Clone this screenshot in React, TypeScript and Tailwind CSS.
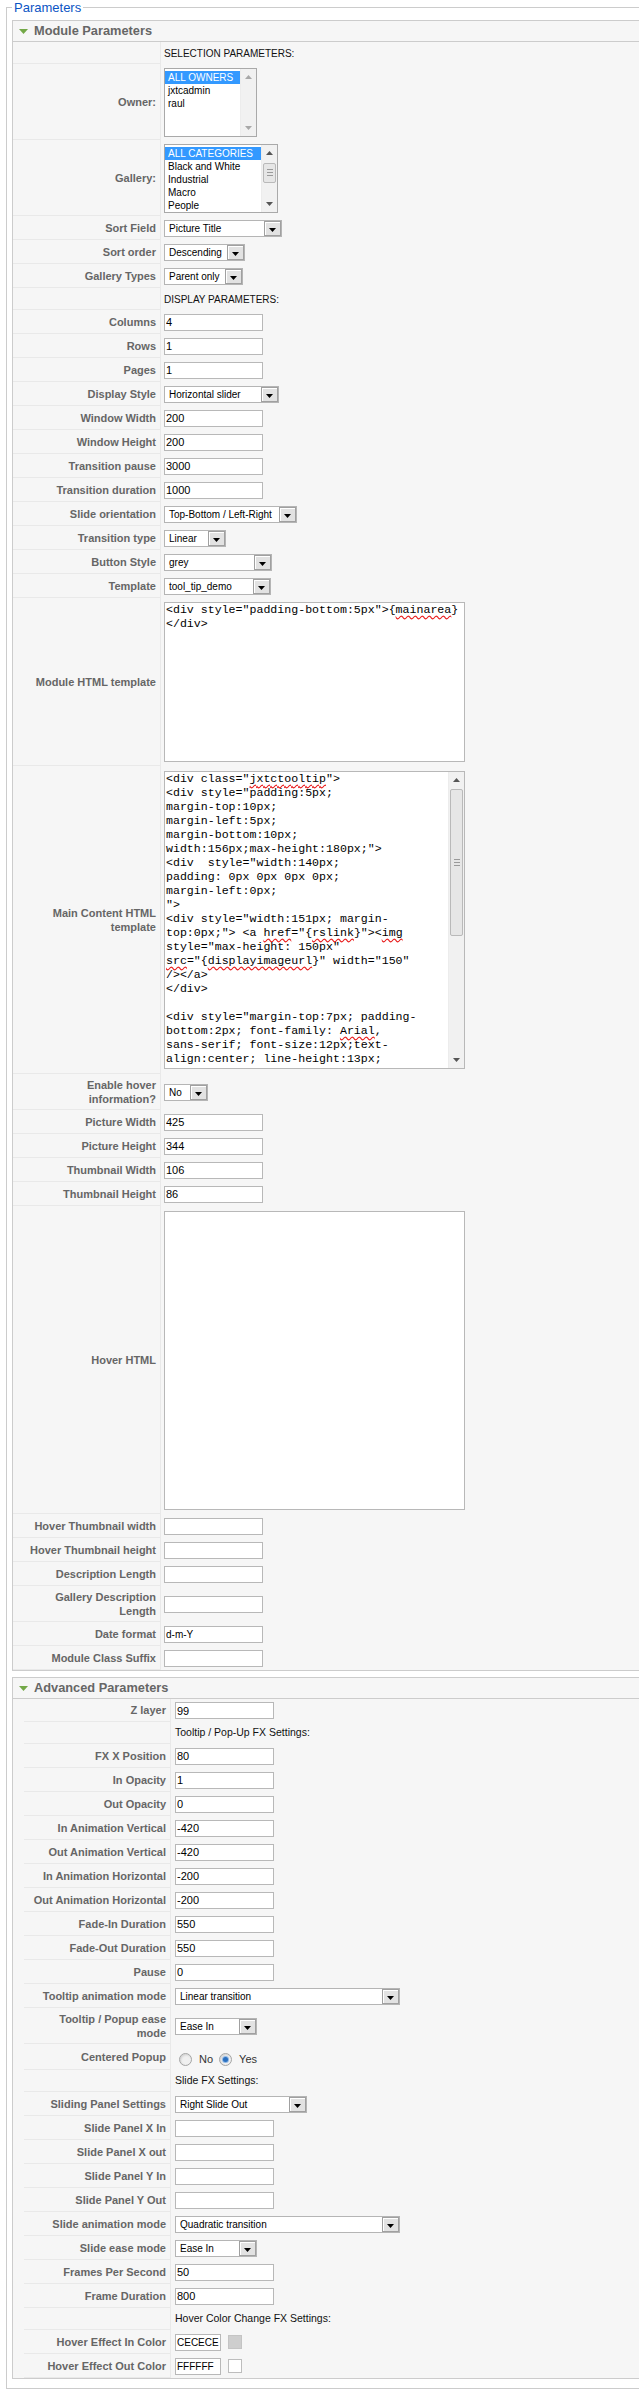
import type { ReactNode } from "react";

const sq = (t: string) => (
  <span className="underline decoration-wavy decoration-[#e81b1b] underline-offset-[2px]">{t}</span>
);

const moduleLines: ReactNode[] = [
  <>
    {'<div style="padding-bottom:5px">{'}
    {sq("mainarea")}
    {"}"}
  </>,
  "</div>",
];

const mainLines: ReactNode[] = [
  <>
    {'<div class="'}
    {sq("jxtctooltip")}
    {'">'}
  </>,
  '<div style="padding:5px;',
  "margin-top:10px;",
  "margin-left:5px;",
  "margin-bottom:10px;",
  'width:156px;max-height:180px;">',
  '<div  style="width:140px;',
  "padding: 0px 0px 0px 0px;",
  "margin-left:0px;",
  '">',
  '<div style="width:151px; margin-',
  <>
    {'top:0px;"> <a '}
    {sq("href")}
    {'="{'}
    {sq("rslink")}
    {'}"><'}
    {sq("img")}
  </>,
  'style="max-height: 150px"',
  <>
    {sq("src")}
    {'="{'}
    {sq("displayimageurl")}
    {'}" width="150"'}
  </>,
  "/></a>",
  "</div>",
  "",
  '<div style="margin-top:7px; padding-',
  <>
    {"bottom:2px; font-family: "}
    {sq("Arial")}
    {","}
  </>,
  "sans-serif; font-size:12px;text-",
  "align:center; line-height:13px;",
];

const Arrow = ({ up, color }: { up?: boolean; color: string }) => (
  <svg width="7" height="4" viewBox="0 0 7 4">
    <path d={up ? "M0 4h7L3.5 0z" : "M0 0h7L3.5 4z"} fill={color} />
  </svg>
);

function ScrollBar({ thumb, dim }: { thumb?: string; dim?: boolean }) {
  const c = dim ? "#a8a8a8" : "#555";
  return (
    <div className="w-[16px] shrink-0 flex flex-col bg-[#f1f1f1] border-l border-[#ececec]">
      <div className="h-[16px] flex items-center justify-center">
        <Arrow up color={c} />
      </div>
      <div className="flex-1">
        {thumb && (
          <div
            className={`${thumb} mx-[1px] rounded-[2px] border border-[#b9b9b9] bg-[#e6e6e6] flex flex-col items-center justify-center gap-[2px]`}
          >
            <div className="w-[6px] h-px bg-[#9a9a9a]" />
            <div className="w-[6px] h-px bg-[#9a9a9a]" />
            <div className="w-[6px] h-px bg-[#9a9a9a]" />
          </div>
        )}
      </div>
      <div className="h-[16px] flex items-center justify-center">
        <Arrow color={c} />
      </div>
    </div>
  );
}

function TextInput({ value = "", w = "w-[99px]", small }: { value?: string; w?: string; small?: boolean }) {
  return (
    <input
      readOnly
      value={value}
      className={`${w} h-[17px] border border-[#b8b8b8] bg-white pl-[1px] ${small ? "text-[10px]" : "text-[11px]"} text-black outline-none`}
    />
  );
}

function Select({ value, w }: { value: string; w: string }) {
  return (
    <div className={`${w} h-[17px] border border-[#b5b5b5] bg-white flex`}>
      <span className="flex-1 min-w-0 pl-[4px] text-[10px] leading-[15px] text-black whitespace-nowrap overflow-hidden">
        {value}
      </span>
      <span className="w-[17px] h-[15px] border border-[#a0a0a0] bg-[#e2e2e2] flex items-center justify-center pt-[3px] shadow-[inset_1px_1px_0_#fff]">
        <Arrow color="#000" />
      </span>
    </div>
  );
}

function ListBox({ items, w, thumb, dim }: { items: string[]; w: string; thumb?: string; dim?: boolean }) {
  return (
    <div className={`${w} h-[69px] border border-[#a9a9a9] bg-white flex`}>
      <div className="flex-1 min-w-0 pt-[2px]">
        {items.map((it, i) => (
          <div
            key={it}
            className={`h-[13px] leading-[13px] pl-[3px] text-[10px] whitespace-nowrap ${
              i === 0 ? "bg-[#3399ff] text-white" : "text-black"
            }`}
          >
            {it}
          </div>
        ))}
      </div>
      <ScrollBar thumb={thumb} dim={dim} />
    </div>
  );
}

function CodeArea({ h, lines = [], thumb }: { h: string; lines?: ReactNode[]; thumb?: string }) {
  return (
    <div className={`w-[301px] ${h} border border-[#b8b8b8] bg-white flex`}>
      <div className="flex-1 min-w-0 pl-[1px] font-['Liberation_Mono',monospace] text-[11.6px] text-black">
        {lines.map((l, i) => (
          <div key={i} className="h-[14px] leading-[14px] whitespace-pre">
            {l}
          </div>
        ))}
      </div>
      {thumb && <ScrollBar thumb={thumb} />}
    </div>
  );
}

const Note = ({ children, size = "text-[10px]" }: { children: ReactNode; size?: string }) => (
  <span className={`${size} text-[#111]`}>{children}</span>
);

function Row({ label, h, children, adv }: { label?: ReactNode; h: string; children?: ReactNode; adv?: boolean }) {
  return (
    <div className={`flex ${h}`}>
      <div
        className={`${
          adv ? "w-[147px]" : "w-[148px]"
        } shrink-0 flex items-center justify-end text-right pr-[4px] border-r border-b border-[#e9e9e9] text-[11px] leading-[14px] font-bold text-[#666]`}
      >
        <span>{label}</span>
      </div>
      <div className={`flex items-center ${adv ? "pl-[4px]" : "pl-[3px]"}`}>{children}</div>
    </div>
  );
}

function PanelHeader({ title }: { title: string }) {
  return (
    <div className="h-[21px] border-b border-[#ccc] flex items-center pl-[6px]">
      <svg width="9" height="5" viewBox="0 0 9 5">
        <path d="M0 0h9L4.5 5z" fill="#73a847" />
      </svg>
      <span className="ml-[6px] text-[12.8px] font-bold text-[#666]">{title}</span>
    </div>
  );
}

function Radio({ checked }: { checked?: boolean }) {
  return (
    <span className="w-[13px] h-[13px] rounded-full border border-[#a4a4a4] bg-[#f0f0f0] flex items-center justify-center shadow-[inset_1px_1px_2px_#d0d0d0]">
      {checked && <span className="w-[5px] h-[5px] rounded-full bg-[#2a6fbf] shadow-[0_0_0_1px_#8fb8e6]" />}
    </span>
  );
}

export default function App() {
  return (
    <div className="w-full overflow-hidden bg-white font-['Liberation_Sans',Arial,sans-serif] pb-[7px]">
      <fieldset className="w-[700px] ml-[6px] border border-[#ccc] pl-[5px] pt-[5px] pb-[9px]">
        <legend className="px-[2px] text-[13px] leading-[15px] text-[#0b55c4]">Parameters</legend>

        <div className="border border-[#ccc] bg-[#f6f6f6]">
          <PanelHeader title="Module Parameters" />
          <Row h="h-[22px]">
            <Note>SELECTION PARAMETERS:</Note>
          </Row>
          <Row label="Owner:" h="h-[76px]">
            <ListBox w="w-[93px]" items={["ALL OWNERS", "jxtcadmin", "raul"]} dim />
          </Row>
          <Row label="Gallery:" h="h-[76px]">
            <ListBox
              w="w-[114px]"
              items={["ALL CATEGORIES", "Black and White", "Industrial", "Macro", "People"]}
              thumb="mt-[2px] h-[20px]"
            />
          </Row>
          <Row label="Sort Field" h="h-[24px]">
            <Select w="w-[118px]" value="Picture Title" />
          </Row>
          <Row label="Sort order" h="h-[24px]">
            <Select w="w-[81px]" value="Descending" />
          </Row>
          <Row label="Gallery Types" h="h-[24px]">
            <Select w="w-[79px]" value="Parent only" />
          </Row>
          <Row h="h-[22px]">
            <Note>DISPLAY PARAMETERS:</Note>
          </Row>
          <Row label="Columns" h="h-[24px]">
            <TextInput value="4" />
          </Row>
          <Row label="Rows" h="h-[24px]">
            <TextInput value="1" />
          </Row>
          <Row label="Pages" h="h-[24px]">
            <TextInput value="1" />
          </Row>
          <Row label="Display Style" h="h-[24px]">
            <Select w="w-[115px]" value="Horizontal slider" />
          </Row>
          <Row label="Window Width" h="h-[24px]">
            <TextInput value="200" />
          </Row>
          <Row label="Window Height" h="h-[24px]">
            <TextInput value="200" />
          </Row>
          <Row label="Transition pause" h="h-[24px]">
            <TextInput value="3000" />
          </Row>
          <Row label="Transition duration" h="h-[24px]">
            <TextInput value="1000" />
          </Row>
          <Row label="Slide orientation" h="h-[24px]">
            <Select w="w-[133px]" value="Top-Bottom / Left-Right" />
          </Row>
          <Row label="Transition type" h="h-[24px]">
            <Select w="w-[62px]" value="Linear" />
          </Row>
          <Row label="Button Style" h="h-[24px]">
            <Select w="w-[108px]" value="grey" />
          </Row>
          <Row label="Template" h="h-[24px]">
            <Select w="w-[107px]" value="tool_tip_demo" />
          </Row>
          <Row label="Module HTML template" h="h-[168px]">
            <CodeArea h="h-[160px]" lines={moduleLines} />
          </Row>
          <Row
            label={
              <>
                Main Content HTML
                <br />
                template
              </>
            }
            h="h-[308px]"
          >
            <CodeArea h="h-[298px]" lines={mainLines} thumb="mt-[1px] h-[147px]" />
          </Row>
          <Row
            label={
              <>
                Enable hover
                <br />
                information?
              </>
            }
            h="h-[36px]"
          >
            <Select w="w-[44px]" value="No" />
          </Row>
          <Row label="Picture Width" h="h-[24px]">
            <TextInput value="425" />
          </Row>
          <Row label="Picture Height" h="h-[24px]">
            <TextInput value="344" />
          </Row>
          <Row label="Thumbnail Width" h="h-[24px]">
            <TextInput value="106" />
          </Row>
          <Row label="Thumbnail Height" h="h-[24px]">
            <TextInput value="86" />
          </Row>
          <Row label="Hover HTML" h="h-[308px]">
            <CodeArea h="h-[299px]" />
          </Row>
          <Row label="Hover Thumbnail width" h="h-[24px]">
            <TextInput />
          </Row>
          <Row label="Hover Thumbnail height" h="h-[24px]">
            <TextInput />
          </Row>
          <Row label="Description Length" h="h-[24px]">
            <TextInput />
          </Row>
          <Row
            label={
              <>
                Gallery Description
                <br />
                Length
              </>
            }
            h="h-[36px]"
          >
            <TextInput />
          </Row>
          <Row label="Date format" h="h-[24px]">
            <TextInput value="d-m-Y" small />
          </Row>
          <Row label="Module Class Suffix" h="h-[24px]">
            <TextInput />
          </Row>
        </div>

        <div className="mt-[6px] border border-[#ccc] bg-[#f6f6f6]">
          <PanelHeader title="Advanced Parameters" />
          <div className="pl-[11px]">
            <Row adv label="Z layer" h="h-[23px]">
              <TextInput value="99" />
            </Row>
            <Row adv h="h-[22px]">
              <Note size="text-[10.5px]">Tooltip / Pop-Up FX Settings:</Note>
            </Row>
            <Row adv label="FX X Position" h="h-[24px]">
              <TextInput value="80" />
            </Row>
            <Row adv label="In Opacity" h="h-[24px]">
              <TextInput value="1" />
            </Row>
            <Row adv label="Out Opacity" h="h-[24px]">
              <TextInput value="0" />
            </Row>
            <Row adv label="In Animation Vertical" h="h-[24px]">
              <TextInput value="-420" />
            </Row>
            <Row adv label="Out Animation Vertical" h="h-[24px]">
              <TextInput value="-420" />
            </Row>
            <Row adv label="In Animation Horizontal" h="h-[24px]">
              <TextInput value="-200" />
            </Row>
            <Row adv label="Out Animation Horizontal" h="h-[24px]">
              <TextInput value="-200" />
            </Row>
            <Row adv label="Fade-In Duration" h="h-[24px]">
              <TextInput value="550" />
            </Row>
            <Row adv label="Fade-Out Duration" h="h-[24px]">
              <TextInput value="550" />
            </Row>
            <Row adv label="Pause" h="h-[24px]">
              <TextInput value="0" />
            </Row>
            <Row adv label="Tooltip animation mode" h="h-[24px]">
              <Select w="w-[225px]" value="Linear transition" />
            </Row>
            <Row
              adv
              label={
                <>
                  Tooltip / Popup ease
                  <br />
                  mode
                </>
              }
              h="h-[36px]"
            >
              <Select w="w-[82px]" value="Ease In" />
            </Row>
            <Row adv label="Centered Popup" h="h-[26px]">
              <div className="flex items-center pl-[4px] pt-[4px] text-[11px] text-[#333]">
                <Radio />
                <span className="ml-[7px]">No</span>
                <span className="ml-[6px]">
                  <Radio checked />
                </span>
                <span className="ml-[7px]">Yes</span>
              </div>
            </Row>
            <Row adv h="h-[22px]">
              <Note size="text-[10.5px]">Slide FX Settings:</Note>
            </Row>
            <Row adv label="Sliding Panel Settings" h="h-[24px]">
              <Select w="w-[132px]" value="Right Slide Out" />
            </Row>
            <Row adv label="Slide Panel X In" h="h-[24px]">
              <TextInput />
            </Row>
            <Row adv label="Slide Panel X out" h="h-[24px]">
              <TextInput />
            </Row>
            <Row adv label="Slide Panel Y In" h="h-[24px]">
              <TextInput />
            </Row>
            <Row adv label="Slide Panel Y Out" h="h-[24px]">
              <TextInput />
            </Row>
            <Row adv label="Slide animation mode" h="h-[24px]">
              <Select w="w-[225px]" value="Quadratic transition" />
            </Row>
            <Row adv label="Slide ease mode" h="h-[24px]">
              <Select w="w-[82px]" value="Ease In" />
            </Row>
            <Row adv label="Frames Per Second" h="h-[24px]">
              <TextInput value="50" />
            </Row>
            <Row adv label="Frame Duration" h="h-[24px]">
              <TextInput value="800" />
            </Row>
            <Row adv h="h-[22px]">
              <Note size="text-[10.5px]">Hover Color Change FX Settings:</Note>
            </Row>
            <Row adv label="Hover Effect In Color" h="h-[24px]">
              <TextInput w="w-[46px]" value="CECECE" small />
              <span className="ml-[7px] w-[14px] h-[14px] border border-[#c4c4c4] bg-[#cecece]" />
            </Row>
            <Row adv label="Hover Effect Out Color" h="h-[24px]">
              <TextInput w="w-[46px]" value="FFFFFF" small />
              <span className="ml-[7px] w-[14px] h-[14px] border border-[#bdbdbd] bg-white" />
            </Row>
          </div>
        </div>
      </fieldset>
    </div>
  );
}
